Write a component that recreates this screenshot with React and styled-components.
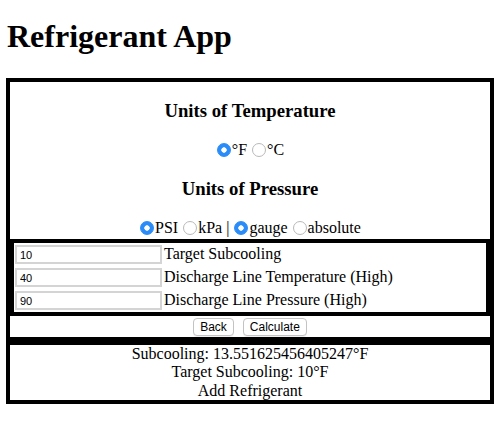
import React, { useState } from 'react';
import styled, { createGlobalStyle } from 'styled-components';

const GlobalStyle = createGlobalStyle`
  body {
    margin: 0;
    background: #fff;
    color: #000;
    font-family: "Liberation Serif", "Times New Roman", serif;
    font-size: 16px;
  }
`;

const Page = styled.div`
  padding: 0 6px;
`;

const Title = styled.h1`
  font-size: 32px;
  font-weight: bold;
  line-height: 37px;
  margin: 18px 0 23px 1px;
`;

const Panel = styled.div`
  border: 4px solid #000;
`;

const Units = styled.div`
  text-align: center;
  padding-bottom: 1px;
`;

const UnitsTitle = styled.h3`
  font-size: 18.72px;
  font-weight: bold;
  line-height: 22px;
  margin: 18px 0;
`;

const RadioRow = styled.div`
  line-height: 20px;
`;

const Radio = styled.input.attrs({ type: 'radio' })`
  appearance: none;
  -webkit-appearance: none;
  width: 14px;
  height: 14px;
  margin: 0 1px;
  border-radius: 50%;
  border: 1px solid #b9b9b9;
  background: #fff;
  vertical-align: -2px;
  box-sizing: border-box;
  cursor: pointer;
  &:checked {
    border-color: #2a8cf8;
    background: radial-gradient(circle, #fff 0 2.4px, #2a8cf8 3px);
  }
`;

const Fields = styled.div`
  border: 4px solid #000;
`;

const FieldRow = styled.div`
  display: flex;
  align-items: baseline;
  height: 23px;
`;

const NumberInput = styled.input`
  box-sizing: border-box;
  width: 147px;
  height: 19px;
  margin: 2px 1px 2px 1px;
  padding: 0 3px;
  border: 2px solid #d4d4d4;
  font-family: "Liberation Sans", Arial, sans-serif;
  font-size: 11px;
  color: #000;
  outline: none;
`;

const FieldLabel = styled.label`
  margin-left: 1px;
  font-size: 16px;
`;

const Buttons = styled.div`
  display: flex;
  justify-content: center;
  gap: 9px;
  padding: 2px 0 1px;
`;

const Button = styled.button`
  height: 18px;
  padding: 0 6px;
  background: #fff;
  border: 1px solid #c3c3c3;
  border-radius: 4px;
  font-family: "Liberation Sans", Arial, sans-serif;
  font-size: 12px;
  color: #000;
  line-height: 16px;
  box-shadow: 0 1px 0 rgba(0, 0, 0, 0.06);
`;

const Result = styled.div`
  border: 4px solid #000;
  text-align: center;
  line-height: 18.4px;
`;

const fields = [
  { key: 'target', label: 'Target Subcooling' },
  { key: 'temp', label: 'Discharge Line Temperature (High)' },
  { key: 'pressure', label: 'Discharge Line Pressure (High)' },
];

export default function App() {
  const [temp, setTemp] = useState('F');
  const [pressure, setPressure] = useState('PSI');
  const [mode, setMode] = useState('gauge');
  const [values, setValues] = useState({ target: '10', temp: '40', pressure: '90' });

  return (
    <Page>
      <GlobalStyle />
      <Title>Refrigerant App</Title>
      <Panel>
        <Units>
          <UnitsTitle>Units of Temperature</UnitsTitle>
          <RadioRow>
            <Radio name="temp" checked={temp === 'F'} onChange={() => setTemp('F')} />°F{' '}
            <Radio name="temp" checked={temp === 'C'} onChange={() => setTemp('C')} />°C
          </RadioRow>
          <UnitsTitle>Units of Pressure</UnitsTitle>
          <RadioRow>
            <Radio name="pressure" checked={pressure === 'PSI'} onChange={() => setPressure('PSI')} />PSI{' '}
            <Radio name="pressure" checked={pressure === 'kPa'} onChange={() => setPressure('kPa')} />kPa |{' '}
            <Radio name="mode" checked={mode === 'gauge'} onChange={() => setMode('gauge')} />gauge{' '}
            <Radio name="mode" checked={mode === 'absolute'} onChange={() => setMode('absolute')} />absolute
          </RadioRow>
        </Units>
        <Fields>
          {fields.map((f) => (
            <FieldRow key={f.key}>
              <NumberInput
                id={f.key}
                value={values[f.key]}
                onChange={(e) => setValues({ ...values, [f.key]: e.target.value })}
              />
              <FieldLabel htmlFor={f.key}>{f.label}</FieldLabel>
            </FieldRow>
          ))}
        </Fields>
        <Buttons>
          <Button>Back</Button>
          <Button>Calculate</Button>
        </Buttons>
      </Panel>
      <Result>
        <div>Subcooling: 13.551625456405247°F</div>
        <div>Target Subcooling: 10°F</div>
        <div>Add Refrigerant</div>
      </Result>
    </Page>
  );
}
